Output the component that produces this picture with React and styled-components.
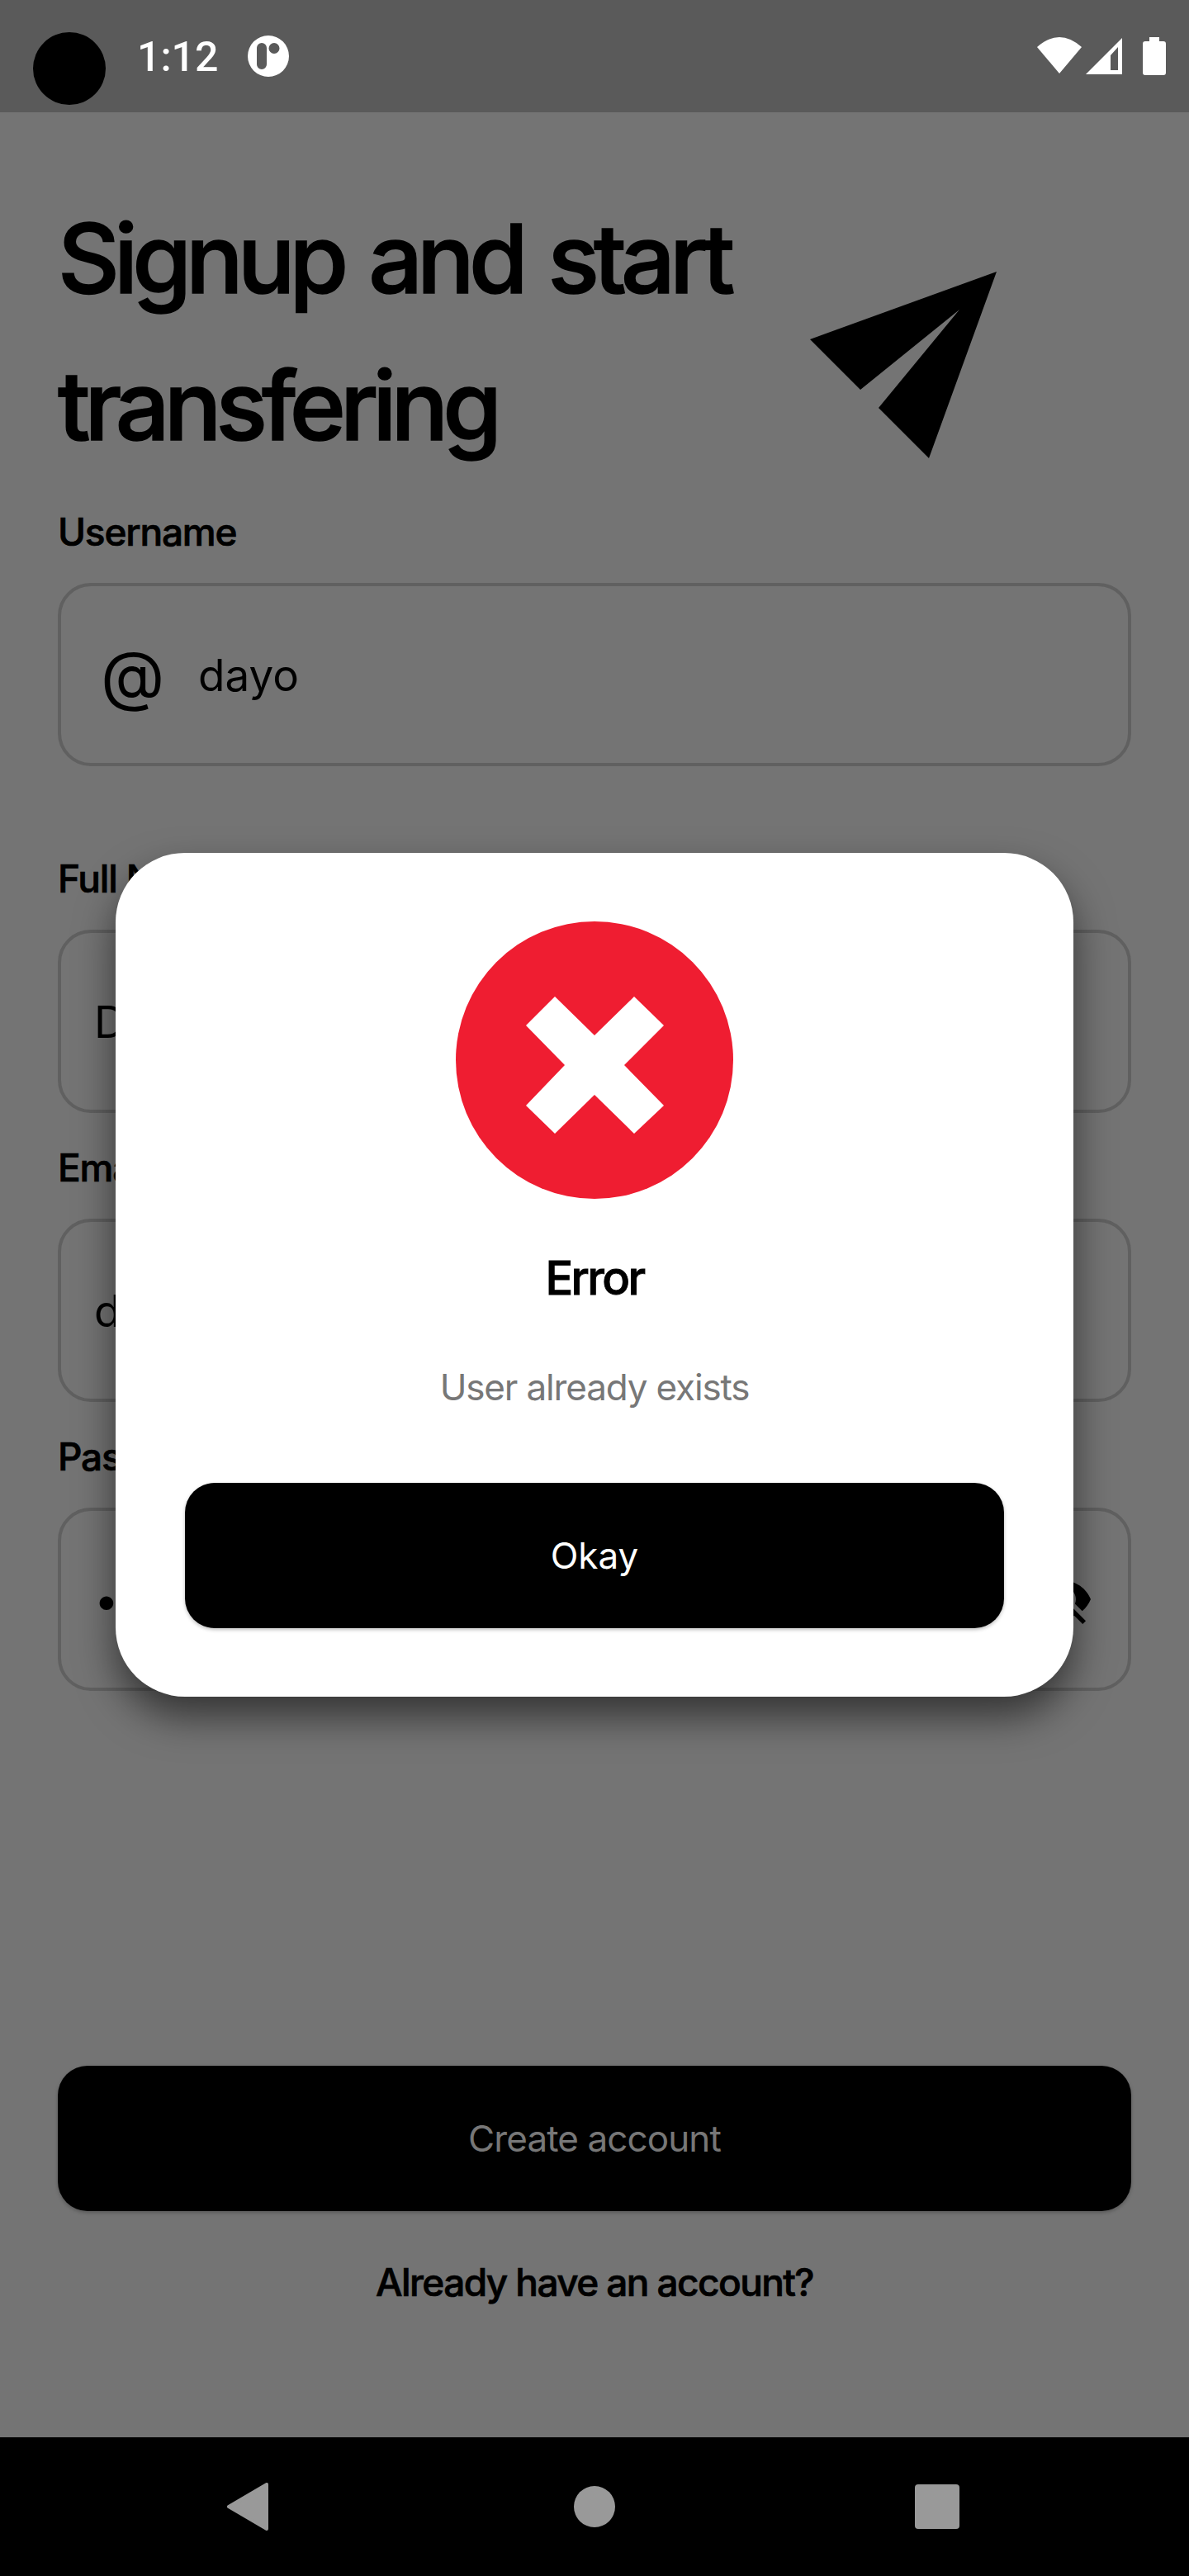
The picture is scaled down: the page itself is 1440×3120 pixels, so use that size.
import React from "react";
import styled, { createGlobalStyle } from "styled-components";
import { MdVisibilityOff } from "react-icons/md";

const GlobalStyle = createGlobalStyle`
    html, body {
        margin: 0;
        padding: 0;
        background: #747474;
    }
    * {
        box-sizing: border-box;
    }
`;

const Screen = styled.div`
    position: relative;
    display: flex;
    flex-direction: column;
    width: 1440px;
    height: 3120px;
    background: #747474;
    font-family: Inter, "Liberation Sans", sans-serif;
    color: #000;
    overflow: hidden;
`;

const StatusBar = styled.div`
    display: flex;
    align-items: center;
    justify-content: space-between;
    flex: 0 0 136px;
    padding: 0 28px 0 40px;
    background: #5a5a5a;
`;

const StatusLeft = styled.div`
    display: flex;
    align-items: center;
`;

const CameraDot = styled.div`
    width: 88px;
    height: 88px;
    margin-top: 30px;
    border-radius: 50%;
    background: #000;
`;

const Time = styled.span`
    margin: 2px 0 0 38px;
    font-family: Roboto, sans-serif;
    font-size: 50px;
    font-weight: 500;
    line-height: 56px;
    color: #fff;
`;

const AppBadge = styled.svg`
    width: 50px;
    height: 50px;
    margin-left: 36px;
`;

const StatusRight = styled.div`
    display: flex;
    align-items: center;
    gap: 3px;
`;

const StatusIcon = styled.svg`
    display: block;
    width: ${(p) => p.$w}px;
    height: 48px;
    margin-left: ${(p) => p.$gap || 0}px;
`;

const Main = styled.div`
    display: flex;
    flex: 1;
    flex-direction: column;
    padding: 0 70px;
`;

const Hero = styled.div`
    display: flex;
    justify-content: space-between;
    height: 466px;
    padding-top: 88px;
`;

const Title = styled.h1`
    margin: 0;
    font-size: 116px;
    font-weight: 500;
    line-height: 178px;
    letter-spacing: -7px;
    word-spacing: 7px;
    -webkit-text-stroke: 1.6px #000;
`;

const Plane = styled.svg`
    flex: none;
    width: 226px;
    height: 226px;
    margin: 105px 163px 0 0;
`;

const Field = styled.div`
    display: flex;
    flex-direction: column;
    margin-bottom: ${(p) => p.$mb}px;
`;

const Label = styled.label`
    height: 104px;
    padding-top: 14px;
    font-size: 46px;
    font-weight: 500;
    line-height: 56px;
    letter-spacing: -1.2px;
    -webkit-text-stroke: 0.7px #000;
`;

const InputBox = styled.div`
    display: flex;
    align-items: center;
    height: 222px;
    padding: 0 42px 0 ${(p) => p.$pl}px;
    border: 4px solid #606060;
    border-radius: 40px;
`;

const AtSign = styled.span`
    width: 118px;
    font-size: 80px;
    line-height: 90px;
`;

const Value = styled.span`
    flex: 1;
    padding-top: 2px;
    font-size: 53px;
    line-height: 62px;
`;

const Footer = styled.div`
    display: flex;
    flex-direction: column;
    align-items: center;
    margin-top: auto;
    padding-bottom: 158px;
`;

const BlackButton = styled.button`
    display: flex;
    align-items: center;
    justify-content: center;
    width: 100%;
    height: 176px;
    border: 0;
    border-radius: 36px;
    background: #000;
    font-family: inherit;
    font-size: 44px;
    letter-spacing: ${(p) => p.$spacing || 0}px;
    color: ${(p) => p.$color};
    box-shadow: 0 2px 4px rgba(0, 0, 0, 0.25);
`;

const LoginLink = styled.div`
    margin-top: 56px;
    font-size: 46px;
    font-weight: 500;
    line-height: 60px;
    letter-spacing: -1.6px;
    -webkit-text-stroke: 0.7px #000;
`;

const NavBar = styled.div`
    display: flex;
    align-items: center;
    flex: 0 0 168px;
    padding-left: 275px;
    background: #000;
`;

const NavIcon = styled.svg`
    display: block;
    width: ${(p) => p.$w}px;
    height: 58px;
    margin-left: ${(p) => p.$ml || 0}px;
`;

const Modal = styled.div`
    position: absolute;
    top: 1033px;
    left: 140px;
    display: flex;
    flex-direction: column;
    align-items: center;
    width: 1160px;
    height: 1022px;
    padding: 83px 84px;
    border-radius: 84px;
    background: #fff;
    box-shadow: 0 24px 48px rgba(0, 0, 0, 0.55);
`;

const ErrorIcon = styled.svg`
    flex: none;
    width: 336px;
    height: 336px;
`;

const ModalTitle = styled.div`
    margin-top: 62px;
    font-size: 56px;
    font-weight: 500;
    line-height: 68px;
    letter-spacing: -2.6px;
    -webkit-text-stroke: 0.9px #000;
`;

const ModalText = styled.div`
    margin-top: 70px;
    font-size: 44px;
    line-height: 56px;
    letter-spacing: -1.15px;
    color: #777;
`;

const ModalButton = styled(BlackButton)`
    margin-top: auto;
`;

const fields = [
    { label: "Full Name", value: "Dayo Ade", pl: 40, mb: 24 },
    { label: "Email", value: "dayo@mail.com", pl: 40, mb: 24 },
];

const App = () => {
    return (
        <Screen>
            <GlobalStyle />
            <StatusBar>
                <StatusLeft>
                    <CameraDot />
                    <Time>1:12</Time>
                    <AppBadge viewBox="0 0 50 50">
                        <path
                            fillRule="evenodd"
                            fill="#fff"
                            d="M25 0a25 25 0 1 0 0 50a25 25 0 1 0 0-50ZM17 9a6 6 0 0 1 6 6v20a6 6 0 0 1-12 0V15a6 6 0 0 1 6-6ZM32 9a6.5 6.5 0 1 1 0 13a6.5 6.5 0 1 1 0-13Z"
                        />
                    </AppBadge>
                </StatusLeft>
                <StatusRight>
                    <StatusIcon $w={54} viewBox="0 0 54 48">
                        <path fill="#fff" d="M0 13Q27-11 54 13L27 45Z" />
                    </StatusIcon>
                    <StatusIcon $w={46} viewBox="0 0 46 48">
                        <path fillRule="evenodd" fill="#fff" d="M46 2V46H2ZM32 23V41H41V13Z" />
                    </StatusIcon>
                    <StatusIcon $w={28} $gap={22} viewBox="0 -1 28 48">
                        <path
                            fill="#fff"
                            d="M8 0H20V5H25A3 3 0 0 1 28 8V43A3 3 0 0 1 25 46H3A3 3 0 0 1 0 43V8A3 3 0 0 1 3 5H8Z"
                        />
                    </StatusIcon>
                </StatusRight>
            </StatusBar>
            <Main>
                <Hero>
                    <Title>
                        Signup and start
                        <br />
                        transfering
                    </Title>
                    <Plane viewBox="0 0 226 226">
                        <path d="M226 0L0 82L61 143L181 46L83 165L144 226Z" />
                    </Plane>
                </Hero>
                <Field $mb={94}>
                    <Label>Username</Label>
                    <InputBox $pl={48}>
                        <AtSign>@</AtSign>
                        <Value>dayo</Value>
                    </InputBox>
                </Field>
                {fields.map((f) => (
                    <Field key={f.label} $mb={f.mb}>
                        <Label>{f.label}</Label>
                        <InputBox $pl={f.pl}>
                            <Value>{f.value}</Value>
                        </InputBox>
                    </Field>
                ))}
                <Field $mb={0}>
                    <Label>Password</Label>
                    <InputBox $pl={40}>
                        <Value>••••••••</Value>
                        <MdVisibilityOff size={72} />
                    </InputBox>
                </Field>
                <Footer>
                    <BlackButton $color="#777" $spacing={-0.9}>Create account</BlackButton>
                    <LoginLink>Already have an account?</LoginLink>
                </Footer>
            </Main>
            <NavBar>
                <NavIcon $w={50} viewBox="0 0 50 58">
                    <path fill="#999" stroke="#999" strokeWidth="4" strokeLinejoin="round" d="M48 2V56L2 29Z" />
                </NavIcon>
                <NavIcon $w={50} $ml={370} viewBox="0 0 50 58">
                    <circle cx="25" cy="29" r="25" fill="#999" />
                </NavIcon>
                <NavIcon $w={54} $ml={363} viewBox="0 0 54 58">
                    <rect x="0" y="2" width="54" height="54" rx="4" fill="#999" />
                </NavIcon>
            </NavBar>
            <Modal>
                <ErrorIcon viewBox="0 0 336 336">
                    <circle cx="168" cy="168" r="168" fill="#ef1d31" />
                    <path
                        fill="#fff"
                        d="M120 91L168 138L216 91L252 126L204 174L252 223L216 257L168 210L120 257L85 223L132 174L85 126Z"
                    />
                </ErrorIcon>
                <ModalTitle>Error</ModalTitle>
                <ModalText>User already exists</ModalText>
                <ModalButton $color="#fff">Okay</ModalButton>
            </Modal>
        </Screen>
    );
};

export default App;
